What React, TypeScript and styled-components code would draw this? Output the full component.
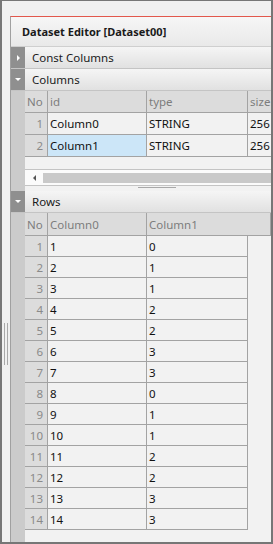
import styled, { createGlobalStyle } from "styled-components";

const GlobalStyle = createGlobalStyle`
  html, body {
    margin: 0;
    padding: 0;
    background: #f0f0f0;
  }
  * {
    box-sizing: border-box;
  }
`;

const columnDefs = [
  { id: "Column0", type: "STRING", size: "256" },
  { id: "Column1", type: "STRING", size: "256" },
];

const rows = [
  [1, 0], [2, 1], [3, 1], [4, 2], [5, 2], [6, 3], [7, 3],
  [8, 0], [9, 1], [10, 1], [11, 2], [12, 2], [13, 3], [14, 3],
];

const App = () => {
  return (
    <>
      <GlobalStyle />
      <Frame>
        <Gutter>
          <Grip />
        </Gutter>
        <Panel>
          <TitleBar>Dataset Editor [Dataset00]</TitleBar>
          <SectionHeader>
            <Toggle $open={false} />
            <SectionLabel>Const Columns</SectionLabel>
          </SectionHeader>
          <SectionHeader>
            <Toggle $open />
            <SectionLabel>Columns</SectionLabel>
          </SectionHeader>
          <SectionBody>
            <Strip />
            <Content>
              <Row $head $h={22}>
                <HeadCell $w={23}>No</HeadCell>
                <HeadCell $w={99}>id</HeadCell>
                <HeadCell $w={101}>type</HeadCell>
                <HeadCell $w={60}>size</HeadCell>
              </Row>
              {columnDefs.map((c, i) => (
                <Row key={c.id} $h={22}>
                  <NoCell $w={23}>{i + 1}</NoCell>
                  <Cell $w={99} $selected={i === 1}>{c.id}</Cell>
                  <Cell $w={101}>{c.type}</Cell>
                  <Cell $w={60}>{c.size}</Cell>
                </Row>
              ))}
              <Blank />
              <ScrollBar>
                <ScrollArrow />
                <Thumb />
              </ScrollBar>
              <Splitter>
                <SplitGrip />
              </Splitter>
            </Content>
          </SectionBody>
          <SectionHeader>
            <Toggle $open />
            <SectionLabel>Rows</SectionLabel>
          </SectionHeader>
          <SectionBody $grow>
            <Strip />
            <Content>
              <Row $head $h={23}>
                <HeadCell $w={23}>No</HeadCell>
                <HeadCell $w={99}>Column0</HeadCell>
                <HeadCell $w={101}>Column1</HeadCell>
              </Row>
              {rows.map((r, i) => (
                <Row key={i} $h={21}>
                  <NoCell $w={23}>{i + 1}</NoCell>
                  <Cell $w={99}>{r[0]}</Cell>
                  <Cell $w={101}>{r[1]}</Cell>
                </Row>
              ))}
            </Content>
          </SectionBody>
        </Panel>
      </Frame>
    </>
  );
};
export default App;

const Frame = styled.div`
  width: 273px;
  height: 544px;
  border: 2px solid #767676;
  border-top: 1px solid #767676;
  background: #f0f0f0;
  display: flex;
  padding-top: 15px;
  font-family: "Noto Sans", "Open Sans", sans-serif;
  font-size: 11.5px;
  color: #111;
`;

const Gutter = styled.div`
  width: 8px;
  display: flex;
  flex-direction: column;
  align-items: center;
`;

const Grip = styled.div`
  margin-top: 307px;
  width: 4px;
  height: 42px;
  border-left: 1px solid #a8a8a8;
  border-right: 1px solid #a8a8a8;
`;

const Panel = styled.div`
  flex: 1;
  min-width: 0;
  display: flex;
  flex-direction: column;
  border-top: 1px solid #e2574c;
  border-left: 1px solid #a0a0a0;
  background: #f2f2f2;
  overflow: hidden;
`;

const TitleBar = styled.div`
  height: 30px;
  display: flex;
  align-items: center;
  padding-left: 11px;
  font-weight: bold;
  font-size: 11px;
  color: #1a1a1a;
  background: linear-gradient(#f6f6f6, #e9e9e9);
  border-bottom: 1px solid #cfcfcf;
`;

const SectionHeader = styled.div`
  height: 22px;
  display: flex;
  background: linear-gradient(#f5f5f5, #e1e1e1);
  border-bottom: 1px solid #c4c4c4;
`;

const Toggle = styled.div<{ $open?: boolean }>`
  width: 14px;
  background: #8f8f8f;
  display: flex;
  align-items: center;
  justify-content: center;
  &::after {
    content: "";
    width: 0;
    height: 0;
    ${(p) =>
      p.$open
        ? `border-left: 3px solid transparent;
           border-right: 3px solid transparent;
           border-top: 3px solid #fff;`
        : `border-top: 3px solid transparent;
           border-bottom: 3px solid transparent;
           border-left: 3px solid #fff;`}
  }
`;

const SectionLabel = styled.div`
  display: flex;
  align-items: center;
  padding-left: 7px;
  color: #1a1a1a;
`;

const SectionBody = styled.div<{ $grow?: boolean }>`
  display: flex;
  ${(p) => (p.$grow ? "flex: 1;" : "")}
`;

const Strip = styled.div`
  width: 14px;
  flex: none;
  background: #cbcbcb;
`;

const Content = styled.div`
  flex: 1;
  min-width: 0;
  display: flex;
  flex-direction: column;
  overflow: hidden;
`;

const Row = styled.div<{ $head?: boolean; $h: number }>`
  display: flex;
  flex: none;
  height: ${(p) => p.$h}px;
  width: ${(p) => (p.$head ? "100%" : "max-content")};
  background: ${(p) => (p.$head ? "#dcdcdc" : "transparent")};
  border-bottom: 1px solid #a3a3a3;
`;

const HeadCell = styled.div<{ $w: number }>`
  width: ${(p) => p.$w}px;
  flex: none;
  display: flex;
  align-items: center;
  padding-left: 2px;
  color: #7d7d7d;
  border-right: 1px solid #a3a3a3;
  white-space: nowrap;
  &:last-child {
    flex: 1 0 auto;
  }
`;

const NoCell = styled.div<{ $w: number }>`
  width: ${(p) => p.$w}px;
  flex: none;
  display: flex;
  align-items: center;
  justify-content: flex-end;
  padding-right: 4px;
  background: #dcdcdc;
  color: #8a8a8a;
  border-right: 1px solid #a3a3a3;
`;

const Cell = styled.div<{ $w: number; $selected?: boolean }>`
  width: ${(p) => p.$w}px;
  flex: none;
  display: flex;
  align-items: center;
  padding-left: 2px;
  background: ${(p) => (p.$selected ? "#cce6f8" : "#f2f2f2")};
  color: #111;
  border-right: 1px solid #a3a3a3;
  white-space: nowrap;
`;

const Blank = styled.div`
  height: 13px;
  border-bottom: 1px solid #c4c4c4;
`;

const ScrollBar = styled.div`
  height: 16px;
  display: flex;
  align-items: center;
  background: #fbfbfb;
  border-bottom: 1px solid #c4c4c4;
`;

const ScrollArrow = styled.div`
  width: 18px;
  display: flex;
  justify-content: center;
  &::after {
    content: "";
    border-top: 3px solid transparent;
    border-bottom: 3px solid transparent;
    border-right: 3px solid #555;
  }
`;

const Thumb = styled.div`
  flex: 1;
  height: 10px;
  background: #c9c9c9;
`;

const Splitter = styled.div`
  height: 5px;
  display: flex;
  justify-content: center;
  padding-left: 18px;
`;

const SplitGrip = styled.div`
  width: 38px;
  height: 2px;
  margin-top: 1px;
  border-top: 1px solid #a8a8a8;
`;
